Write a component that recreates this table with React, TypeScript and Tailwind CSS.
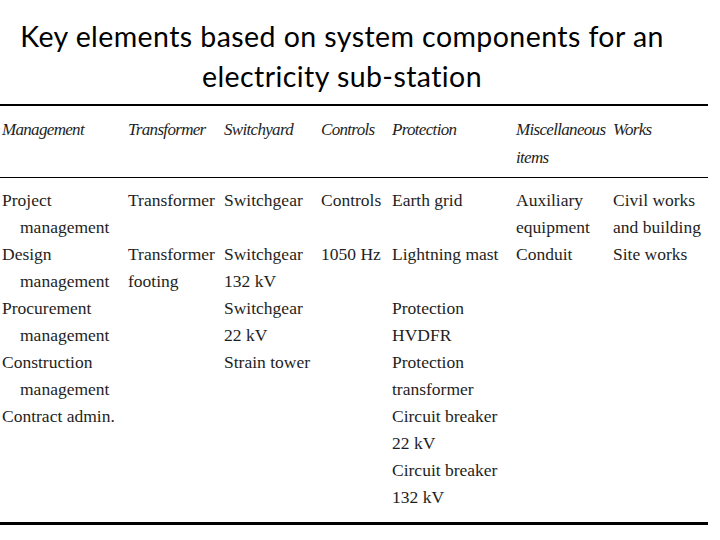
import React from 'react';

const cols = ['Management', 'Transformer', 'Switchyard', 'Controls', 'Protection', 'Miscellaneous items', 'Works'];

// each body row: one entry per column, each entry a list of lines ('>' = hanging indent)
const rows: string[][][] = [
  [['Project', '>management'], ['Transformer'], ['Switchgear'], ['Controls'], ['Earth grid'], ['Auxiliary', 'equipment'], ['Civil works', 'and building']],
  [['Design', '>management'], ['Transformer', 'footing'], ['Switchgear', '132 kV'], ['1050 Hz'], ['Lightning mast'], ['Conduit'], ['Site works']],
  [['Procurement', '>management'], [], ['Switchgear', '22 kV'], [], ['Protection', 'HVDFR'], [], []],
  [['Construction', '>management'], [], ['Strain tower'], [], ['Protection', 'transformer'], [], []],
  [['Contract admin.'], [], [], [], ['Circuit breaker', '22 kV', 'Circuit breaker', '132 kV'], [], []],
];

const grid = 'grid grid-cols-[126px_96px_97px_71px_124px_97px_97px]';

const Lines: React.FC<{ lines: string[] }> = ({ lines }) => (
  <div>
    {lines.map((l, i) =>
      l.startsWith('>') ? (
        <div key={i} className="pl-[18px] whitespace-nowrap">{l.slice(1)}</div>
      ) : (
        <div key={i} className="whitespace-nowrap">{l}</div>
      )
    )}
  </div>
);

export default function App() {
  return (
    <div className="w-[720px] h-[540px] bg-white overflow-hidden">
      <div
        className="w-[684px] pt-[16px] text-center text-[28.5px] leading-[40px] text-black tracking-[0.015em]"
        style={{ fontFamily: 'Lato, "Open Sans", sans-serif' }}
      >
        <div>Key elements based on system components for an</div>
        <div>electricity sub-station</div>
      </div>

      <div
        className="w-[708px] mt-[8px] text-[17.5px] text-[#1e1e1e]"
        style={{ fontFamily: '"Liberation Serif", "DejaVu Serif", serif' }}
      >
        <div className="border-t-2 border-black" />
        <div className={`${grid} pl-[2px] pt-[10px] pb-[5px] leading-[28px] italic text-[17px] tracking-[-0.04em]`}>
          {cols.map((c) => (
            <div key={c}>
              {c === 'Miscellaneous items' ? (
                <>
                  <div>Miscellaneous</div>
                  <div>items</div>
                </>
              ) : (
                <div>{c}</div>
              )}
            </div>
          ))}
        </div>
        <div className="border-t border-black" />
        <div className="pl-[2px] pt-[9px] pb-[11px] leading-[27px]">
          {rows.map((r, i) => (
            <div key={i} className={grid}>
              {r.map((cell, j) => (
                <Lines key={j} lines={cell} />
              ))}
            </div>
          ))}
        </div>
        <div className="border-t-[3px] border-black" />
      </div>
    </div>
  );
}
